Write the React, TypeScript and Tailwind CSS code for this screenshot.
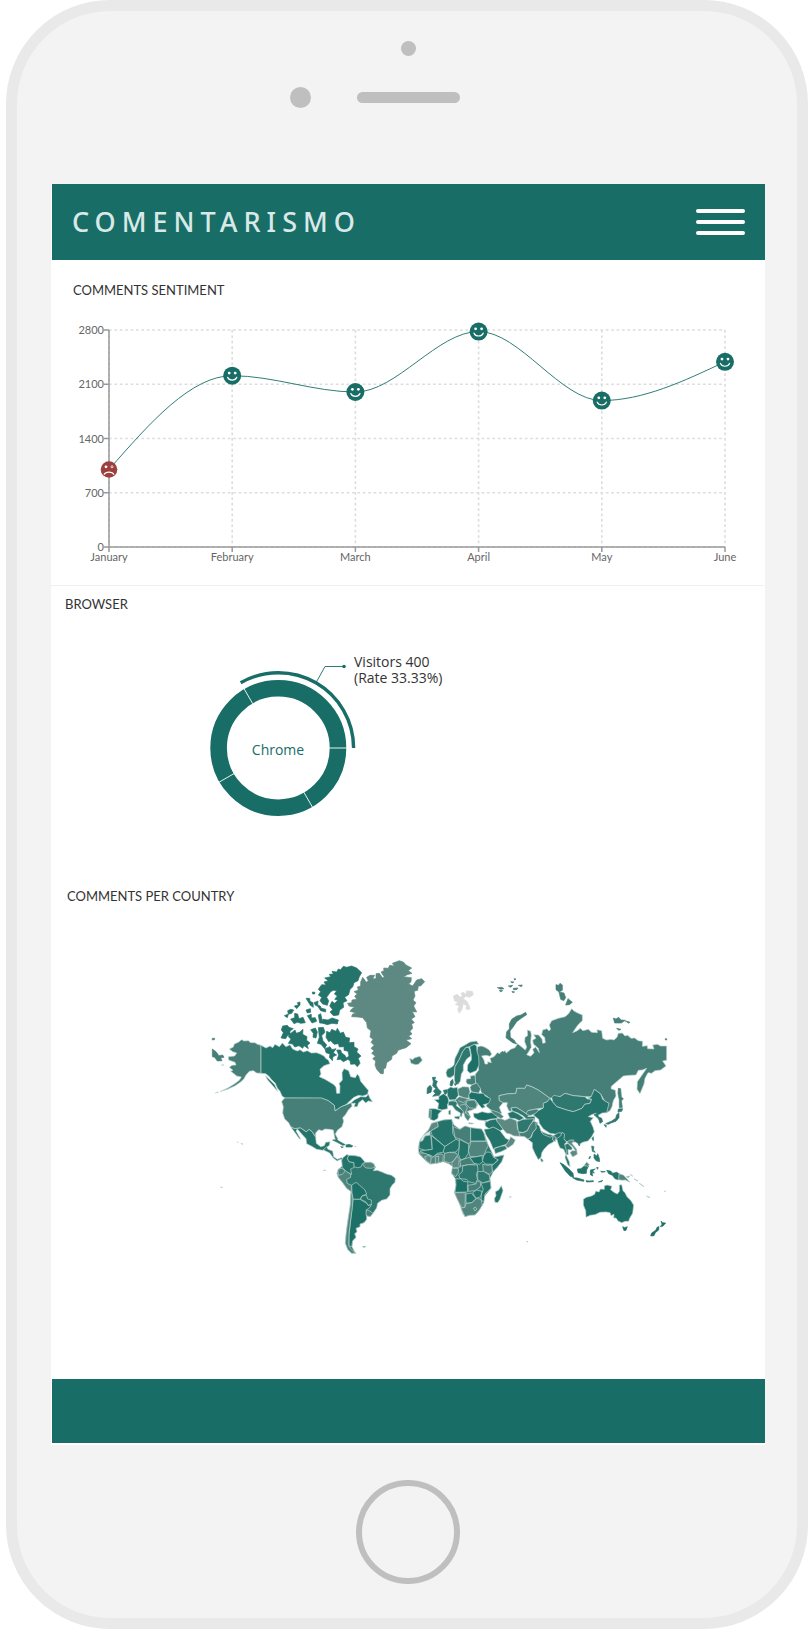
import { ReactNode } from "react";

interface SentimentPoint {
  month: string;
  comments: number;
}

interface Region {
  d: string;
  fill: string;
  islands?: boolean;
}

const GREEN = "#186e66";

const sentiment: SentimentPoint[] = [
  { month: "January", comments: 1000 },
  { month: "February", comments: 2210 },
  { month: "March", comments: 2000 },
  { month: "April", comments: 2780 },
  { month: "May", comments: 1890 },
  { month: "June", comments: 2390 },
];

const ticks = [0, 700, 1400, 2100, 2800];

const chart = { left: 58, right: 674, top: 20, bottom: 237 };

const xAt = (i: number) => chart.left + ((chart.right - chart.left) * i) / (sentiment.length - 1);
const yAt = (v: number) => chart.bottom - ((chart.bottom - chart.top) * v) / 2800;

// monotone cubic interpolation through evenly spaced points
function monotonePath(points: { x: number; y: number }[]) {
  const n = points.length;
  const slopes = points.slice(1).map((p, i) => (p.y - points[i].y) / (p.x - points[i].x));
  const tangents = points.map((_, i) => {
    if (i === 0 || i === n - 1) return 0;
    const a = slopes[i - 1];
    const b = slopes[i];
    if (a * b <= 0) return 0;
    return Math.sign(a) * Math.min(Math.abs(a), Math.abs(b), Math.abs(a + b) / 4) * 2;
  });
  tangents[0] = (3 * slopes[0] - tangents[1]) / 2;
  tangents[n - 1] = (3 * slopes[n - 2] - tangents[n - 2]) / 2;
  let d = `M${points[0].x},${points[0].y}`;
  for (let i = 1; i < n; i++) {
    const p = points[i - 1];
    const q = points[i];
    const dx = (q.x - p.x) / 3;
    d += `C${p.x + dx},${p.y + dx * tangents[i - 1]} ${q.x - dx},${q.y - dx * tangents[i]} ${q.x},${q.y}`;
  }
  return d;
}

function Face({ x, y, happy }: { x: number; y: number; happy: boolean }) {
  return (
    <g transform={`translate(${x} ${y})`}>
      <circle r={happy ? 9 : 8.3} fill={happy ? GREEN : "#9c3f3e"} />
      <circle cx="-3" cy="-2.7" r="1.4" fill="#fff" />
      <circle cx="3" cy="-2.7" r="1.4" fill="#fff" />
      {!happy && <circle cx="3" cy="-2.7" r="0.7" fill="#9c3f3e" />}
      <path d={happy ? "M-4.6 1.6C-3 5.4 3 5.4 4.6 1.6" : "M-4.8 4.8C-3.4 1.8 3.4 1.8 4.8 4.8"} fill="none" stroke="#fff" strokeWidth="1.2" strokeLinecap="round" />
    </g>
  );
}

function SentimentChart() {
  const points = sentiment.map((p, i) => ({ x: xAt(i), y: yAt(p.comments) }));
  return (
    <svg viewBox="0 0 713 275" className="block w-full font-[Lato,sans-serif] text-[11px]" role="img" aria-label="Comments sentiment">
      <g stroke="#ddd" strokeWidth="1.6" strokeDasharray="2.7 2.7">
        {ticks.map((t) => <line key={t} x1={chart.left} x2={chart.right} y1={yAt(t)} y2={yAt(t)} />)}
        {points.map((p) => <line key={p.x} x1={p.x} x2={p.x} y1={chart.top} y2={chart.bottom} />)}
      </g>
      <g stroke="#999" strokeWidth="1.5">
        <path d={`M${chart.left},${chart.top}V${chart.bottom}H${chart.right}`} fill="none" />
        {ticks.map((t) => <line key={t} x1={chart.left - 5} x2={chart.left} y1={yAt(t)} y2={yAt(t)} />)}
        {points.map((p) => <line key={p.x} x1={p.x} x2={p.x} y1={chart.bottom} y2={chart.bottom + 5} />)}
      </g>
      <g fill="#666">
        {ticks.map((t) => <text key={t} x={chart.left - 5} y={yAt(t) + 4} textAnchor="end">{t}</text>)}
        {sentiment.map((p, i) => <text key={p.month} x={xAt(i)} y={chart.bottom + 14} textAnchor="middle">{p.month}</text>)}
      </g>
      <path d={monotonePath(points)} fill="none" stroke={GREEN} strokeWidth="0.9" />
      {sentiment.map((p, i) => <Face key={p.month} x={points[i].x} y={points[i].y} happy={p.comments >= 1500} />)}
    </svg>
  );
}

function BrowserChart() {
  const polar = (r: number, deg: number) => {
    const a = (deg * Math.PI) / 180;
    return `${227.3 + r * Math.cos(a)},${118 - r * Math.sin(a)}`;
  };
  return (
    <svg viewBox="0 0 713 240" className="block w-full font-['Open_Sans',sans-serif] text-sm" role="img" aria-label="Visitors by browser">
      <circle cx="227.3" cy="118" r="59.7" fill="none" stroke={GREEN} strokeWidth="16.6" />
      {[0, 120, 210, 300].map((deg) => <path key={deg} d={`M${polar(51, deg)}L${polar(69, deg)}`} stroke="#fff" strokeWidth="0.9" />)}
      <path d={`M${polar(75.3, 120)}A75.3,75.3 0 0 1 ${polar(75.3, 0)}`} fill="none" stroke={GREEN} strokeWidth="3.4" />
      <path d={`M${polar(75.3, 60)}L274,36.5H293`} fill="none" stroke={GREEN} strokeWidth="0.9" />
      <circle cx="293" cy="36.5" r="1.8" fill={GREEN} />
      <text x="227" y="125" textAnchor="middle" fill={GREEN}>Chrome</text>
      <text x="303" y="37" fill="#333">Visitors 400</text>
      <text x="303" y="53" fill="#333">(Rate 33.33%)</text>
    </svg>
  );
}

const D1 = "#1d7067";
const D2 = "#24746b";
const D3 = "#2f786f";
const M1 = "#457f77";
const M2 = "#4f857c";
const L1 = "#5d8982";

const northAmerica: Region[] = [
  { fill: M1, d: "M88,297 100,291 103,282 115,277 125,269 132,273 145,272 152,278 165,278 172,283 183,286V370L170,369 160,362 148,364 138,375 132,386 122,396 104,408 84,417 60,425 85,413 103,402 118,391 124,381 110,378 103,372 92,364 99,361 88,352 96,346 108,345 105,337 94,333 86,330 85,320 104,318 110,309 98,305Z" },
  { fill: M1, islands: true, d: "M37,297 48,305 57,317 68,315 72,322 62,324 66,332 52,333 44,322 37,320ZM37,265 44,265 43,269 37,270Z" },
  { fill: D2, d: "M183,286 198,294 210,288 218,293 225,283 238,290 247,279 258,290 270,284 278,297 292,303 300,299 310,306 322,302 334,309 350,308 362,313 372,318 378,326 385,330 390,341 372,347 360,358 363,372 358,380 375,388 390,397 402,404 408,412 410,430 419,430 420,408 417,401 427,390 426,368 432,356 446,362 452,380 466,383 472,372 478,380 482,394 493,407 505,421 503,433 488,438 476,436 462,442 450,452 438,464 424,470 405,483 403,466 385,452 365,445 255,444 246,438 240,424 232,414 226,400 214,388 206,378 197,371 183,370Z" },
  { fill: D2, d: "M452,460 464,449 482,440 498,441 505,433 510,445 518,455 505,453 497,459 488,449 476,458 472,470 462,470 466,460ZM196,377 212,392 224,404 233,424 226,416 214,402 203,390Z" },
  { fill: D2, islands: true, d: "M395,238 408,244 412,235 421,250 430,246 437,262 449,264 447,278 462,277 462,290 474,297 470,306 483,318 475,325 480,340 472,350 464,342 452,343 450,332 438,325 447,318 444,304 432,301 432,290 418,291 415,281 402,283 392,272 386,275 378,262 380,244 390,248Z" },
  { fill: D2, islands: true, d: "M485,68 470,54 455,48 440,52 430,49 422,59 415,57 410,66 396,64 400,72 388,73 392,80 374,84 385,92 372,96 378,105 365,104 355,118 362,125 355,135 365,142 360,152 368,162 382,166 386,152 380,142 392,125 400,121 410,122 403,132 412,138 404,148 414,151 403,160 396,154 389,168 398,179 390,186 400,197 416,195 419,180 431,172 429,158 441,152 434,142 446,134 450,118 458,111 462,98 474,92 478,80Z" },
  { fill: D2, islands: true, d: "M248,228 262,226 267,232 280,236 270,243 270,254 262,257 257,266 243,264 250,248 244,240ZM270,252 285,240 289,250 300,246 309,238 308,253 321,260 320,271 330,279 322,286 325,296 312,287 308,295 297,287 284,291 278,282 265,280 273,267 265,260Z" },
  { fill: D2, islands: true, d: "M253,197 265,192 263,182 272,178 281,180 275,190 265,193 262,203ZM272,207 284,203 284,190 293,192 297,206 309,202 316,218 303,220 292,217 282,221ZM318,145 329,145 330,154 339,158 340,172 331,166ZM342,158 354,153 353,168 346,166ZM283,168 295,165 292,158 300,156 300,165 290,176ZM318,180 331,176 332,187 322,189ZM350,164 361,168 363,174 377,178 377,186 362,182ZM322,197 334,193 334,204 346,203 350,214 336,219ZM355,195 362,191 365,204 371,220 359,219ZM332,239 346,234 352,246 348,264 339,262 340,250ZM355,233 370,232 375,247 365,257 369,272 380,285 374,296 363,283 352,280 358,262ZM369,208 384,210 396,204 415,210 412,222 396,220 382,224 369,220ZM410,300 422,300 425,309 434,315 442,329 430,335 421,328 411,329 416,315ZM375,296 390,290 396,299 408,296 400,308 410,315 399,320 397,332 388,322 390,312 378,308ZM337,126 345,127 344,132 338,132Z" },
  { fill: M1, d: "M255,444H365L385,452 403,466 405,483 424,470 440,464 454,458 456,469 445,480 436,495 428,503 431,514 426,530 413,540 406,552 414,567 410,574 404,564 400,540 388,538 375,537 366,542 356,539 347,549 347,562 336,545 327,538 319,546 302,534 283,536 272,530 266,518 254,507 248,489 250,470 245,455 250,448Z" },
  { fill: D2, d: "M272,530 283,536 302,534 319,546 327,538 336,545 347,562 349,580 362,590 373,587 377,577 390,575 388,586 377,595 368,601 350,598 335,589 320,581 318,566 305,552 292,537 288,543 302,567 298,566 283,545Z" },
  { fill: D3, d: "M370,600 380,590 384,598 398,603 401,620 412,628 424,623 434,628 422,628 411,633 400,624 389,609Z" },
  { fill: D3, islands: true, d: "M398,570 410,569 421,576 436,584 428,586 412,577ZM438,585 447,583 458,587 456,591 438,591ZM422,590 430,591 425,593Z" },
  { fill: "#b4cfcb", islands: true, d: "M112,576 115,577 114,578ZM123,580 129,582 127,584ZM64,345 72,345ZM46,429 56,426ZM463,589 469,590ZM370,661 378,661ZM61,712 68,712Z" },
  { fill: L1, islands: true, d: "M443,160 455,158 456,150 470,148 464,138 472,132 462,125 475,120 472,111 482,108 482,96 488,82 495,91 498,97 505,93 500,82 510,76 524,76 518,86 528,86 528,71 538,70 548,84 552,80 543,66 552,62 551,54 565,55 569,46 583,48 577,40 598,32 610,36 618,45 635,54 625,62 636,70 622,74 610,80 634,83 633,95 626,102 638,108 650,90 665,86 674,95 662,108 655,108 653,121 642,124 645,138 639,150 648,158 641,168 650,186 637,185 645,200 634,207 643,218 635,222 638,235 630,244 636,252 626,258 635,266 618,270 633,281 618,293 605,297 594,301 590,310 576,318 575,328 560,338 557,354 551,357 550,371 542,371 530,358 525,345 527,333 518,326 526,319 515,310 522,302 513,295 522,286 513,277 519,268 510,261 513,242 502,234 500,218 488,203 473,201 455,200 457,193 468,189 450,184 455,177 464,172 447,168Z" },
  { fill: M1, d: "M629,325 638,329 644,323 660,319 667,331 655,343 647,344 633,340Z" },
];

const southAmerica: Region[] = [
  { fill: D3, d: "M425,120 430,112 437,112 440,104 450,107 465,107 476,109 482,113 487,121 495,128 512,127 520,130 527,142 520,152 532,151 548,157 560,162 575,166 586,175 585,187 576,196 570,206 570,225 560,237 545,241 533,250 530,264 518,281 510,290 500,288 500,298 492,308 480,312 480,320 468,325 471,335 464,341 468,352 458,362 456,380 462,392 468,400 455,400 443,388 436,370 438,345 441,320 445,290 450,260 452,230 453,212 440,205 428,188 415,172 411,160 415,148 427,138Z" },
  { fill: M2, d: "M415,148 432,147 440,155 452,162 452,172 440,178 441,190 455,196 453,215 440,205 428,188 415,172 411,160Z" },
  { fill: M1, d: "M414,148 426,145 436,153 427,163 415,166Z" },
  { fill: D2, d: "M425,120 430,112 440,104 447,106 442,116 447,125 462,128 463,142 452,147 455,163 440,155 427,143Z" },
  { fill: D1, d: "M447,106 465,107 482,111 495,126 487,131 483,141 472,143 462,140 462,128 447,125 442,115Z" },
  { fill: M2, d: "M495,127 512,127 522,132 525,142 514,145 498,144 488,135Z" },
  { fill: D1, d: "M455,195 468,187 478,195 495,210 500,222 486,228 480,238 460,238 456,220Z" },
  { fill: D2, d: "M486,228 499,225 503,237 514,240 514,254 505,256 497,245 481,238Z" },
  { fill: D1, d: "M460,238 480,238 500,250 505,257 514,254 510,262 499,270 500,298 492,308 480,312 480,320 468,325 471,335 464,341 468,352 458,362 455,380 447,378 447,345 452,300 456,265Z" },
  { fill: M1, d: "M499,269 509,273 519,280 510,290 498,286Z" },
  { fill: M2, d: "M453,215 457,225 457,262 452,300 447,340 446,376 452,385 466,399 455,400 443,388 436,370 438,345 441,320 446,288 451,255Z" },
  { fill: D3, d: "M488,379 498,379 495,382 489,382Z" },
];

const eurasia: Region[] = [
  { fill: M1, d: "M200,310 203,290 214,288 225,292 238,300 245,312 240,319 228,316 215,318 222,330 225,342 233,342 233,335 244,338 240,325 252,320 262,308 270,311 285,302 289,309 302,298 315,293 323,281 335,291 346,300 350,291 344,275 345,262 353,257 352,240 362,244 364,256 362,276 364,292 356,305 350,314 362,319 372,308 368,298 377,291 388,308 385,295 370,282 368,270 378,265 371,254 386,255 396,267 398,280 406,278 404,262 395,254 398,240 411,236 417,243 422,238 418,225 425,212 445,205 465,200 475,192 485,176 492,183 505,190 517,195 517,212 507,221 500,230 488,248 502,242 511,235 519,242 535,238 545,247 562,248 561,239 575,242 578,265 590,270 603,268 612,270 621,262 625,250 637,249 645,258 653,256 663,265 674,264 685,272 698,274 697,289 712,287 713,296 732,297 728,285 742,283 752,288 770,288V331L758,333 768,348 752,360 735,362 725,370 714,368 705,385 702,402 690,431 681,418 682,395 694,378 710,355 697,360 685,361 678,375 660,376 640,378 626,390 604,409 603,416 616,421 618,438 610,452 606,470 600,482 590,488 585,480 597,460 585,455 572,432 553,418 545,440 525,440 490,437 465,430 450,440 420,445 385,420 365,410 350,405 345,415 320,415 318,430 290,432 267,437 268,452 280,457 268,472 275,490 262,492 250,485 240,478 228,468 240,447 230,438 215,430 210,415 196,402 195,385 196,373 206,360Z" },
  { fill: M1, islands: true, d: "M347,187 350,194 335,204 320,215 310,230 300,243 301,262 312,270 320,282 308,278 288,263 290,245 298,237 298,222 305,208 320,198 333,195ZM438,104 446,106 450,100 457,105 457,121 447,126 438,119ZM447,126 462,129 467,143 461,152 452,148ZM474,146 487,157 478,164 467,165ZM610,204 618,207 626,202 633,210 646,211 634,219 614,219ZM646,213 659,216 657,220ZM620,235 633,238 626,241ZM625,415 632,416 634,440 640,447 634,452 637,472 628,473 628,450 624,430ZM766,266 770,266 770,270 766,270ZM270,310 278,304 278,309Z" },
  { fill: M1, islands: true, d: "M262,113 275,112 282,116 272,118ZM268,121 278,122 272,126ZM295,108 308,106 303,112ZM310,115 324,114 320,119 310,119ZM325,106 337,105 334,110ZM302,95 312,96 306,99ZM312,86 318,87 314,90ZM306,124 314,126 308,128Z" },
  { fill: "#dcdcdc", islands: true, d: "M130,138 142,133 150,142 157,137 153,130 160,127 168,133 170,123 187,124 190,134 178,142 167,138 160,147 170,153 178,168 180,178 168,178 170,167 160,161 156,178 148,190 143,178 148,168 136,163 145,156 134,153Z" },
  { fill: D3, d: "M112,358 124,352 132,345 135,325 145,305 150,293 165,285 180,276 200,273 206,283 193,283 180,290 168,292 158,305 148,328 135,350 133,375 120,384 111,380 108,368Z" },
  { fill: D3, d: "M133,377 135,350 148,328 158,305 168,292 177,293 181,308 182,318 170,327 160,345 160,362 154,372 152,388 146,402 137,404 133,390Z" },
  { fill: D1, d: "M179,290 193,283 200,288 201,305 206,320 207,345 199,362 180,370 172,362 173,345 184,330 184,315Z" },
  { fill: D3, islands: true, d: "M122,393 128,388 130,398 126,408 120,406ZM133,401 139,402 136,407ZM146,392 150,391 149,395Z" },
  { fill: M1, d: "M170,387 182,386 181,378 195,376 197,400 186,405 172,402 168,395Z" },
  { fill: M1, d: "M185,405 200,399 212,416 206,430 184,425 180,412Z" },
  { fill: M2, d: "M143,417 158,410 176,411 180,425 176,445 162,444 145,436Z" },
  { fill: D2, d: "M112,418 122,411 131,414 142,412 145,436 136,449 118,450 112,436Z" },
  { fill: D1, d: "M73,449 87,448 86,440 100,431 113,440 117,456 112,464 113,476 96,480 83,476 86,460Z" },
  { fill: D1, d: "M57,476 75,476 96,482 85,492 84,505 72,512 60,508Z" },
  { fill: M2, d: "M57,480 64,480 63,505 56,503Z" },
  { fill: D3, islands: true, d: "M67,382 77,382 74,390 82,394 78,405 84,416 94,425 88,436 68,439 76,430 70,424 77,416 68,408 70,395ZM52,414 60,406 66,413 63,427 51,431ZM100,421 112,419 112,428 105,434Z" },
  { fill: D3, d: "M115,455 134,450 142,460 139,467 160,482 163,488 157,489 155,500 150,498 151,489 136,480 127,467 115,466ZM133,500 150,498 147,508 135,505ZM116,482 122,480 122,494 116,493Z" },
  { fill: M2, d: "M136,450 148,440 176,447 200,452 203,466 195,476 184,481 173,484 182,500 174,513 165,502 160,485 145,466 140,457Z" },
  { fill: "none", d: "M145,452 160,458 176,447M150,466 165,462 172,474 165,488M118,450 136,455M165,462 170,455M184,481 165,488 182,500" },
  { fill: D1, d: "M176,434 184,426 206,430 220,430 226,438 242,446 236,460 220,464 226,471 216,475 205,462 196,450 178,447Z" },
  { fill: M1, d: "M172,452 194,450 200,463 198,475 180,474 168,462Z" },
  { fill: D1, d: "M190,490 203,490 216,485 234,489 250,487 262,495 262,506 244,507 225,512 205,510 192,502Z" },
  { fill: M2, d: "M240,480 250,482 268,488 281,500 273,506 262,500 250,492ZM176,518 190,520 188,522 176,521ZM224,514 233,513 228,519Z" },
  { fill: M2, d: "M267,437 290,432 318,430 320,415 345,415 350,405 365,410 385,420 420,445 412,455 400,460 400,474 378,477 355,482 350,492 335,482 318,472 303,474 305,484 297,483 290,468 292,458 280,458 268,452Z" },
  { fill: D3, d: "M303,474 318,472 335,482 350,492 364,488 353,500 375,499 374,512 352,510 340,498 322,488 308,484Z" },
  { fill: D2, d: "M293,490 308,484 325,492 342,504 328,512 316,506 300,505Z" },
  { fill: M1, d: "M353,482 378,477 388,480 376,491 360,497 348,492Z" },
  { fill: D3, d: "M425,442 432,436 450,440 465,430 490,437 525,440 532,447 545,448 540,460 524,463 516,475 490,485 470,480 440,470 428,456Z" },
  { fill: D2, d: "M553,418 572,432 578,448 588,455 597,460 590,488 577,489 566,495 557,490 545,494 535,500 550,503 541,514 549,531 553,545 545,560 534,573 518,577 507,584 496,576 480,577 466,573 456,560 440,553 420,550 400,537 388,520 386,508 370,495 385,482 400,474 400,460 412,455 420,445 428,456 440,470 470,480 490,485 516,475 524,463 540,460 545,448 532,444 543,441Z" },
  { fill: D3, islands: true, d: "M552,494 563,490 565,500 575,505 578,515 570,520 566,507ZM625,477 638,476 635,484 624,486ZM627,488 627,503 618,514 605,518 595,523 587,521 605,513 617,505 620,494ZM582,524 589,526 588,532ZM505,583 510,584 508,588Z" },
];

const southEast: Region[] = [
  { fill: D2, d: "M225,8 240,0 258,-3 270,15 280,28 270,32 250,22 237,26 226,18Z" },
  { fill: D2, d: "M222,28 237,26 250,21 270,32 280,45 287,55 298,60 292,72 272,79 255,84 250,88 240,64 228,45Z" },
  { fill: D3, d: "M252,86 272,79 286,77 291,86 276,94 256,101Z" },
  { fill: L1, d: "M298,60 302,50 316,60 310,73 294,84 286,77Z" },
  { fill: L1, d: "M260,-6 276,-3 285,1 300,-6 320,2 322,25 330,40 331,49 312,48 300,42 290,40 279,28 270,15 260,3Z" },
  { fill: D3, d: "M321,5 340,-2 357,-3 372,-4 366,8 360,16 352,32 338,38 325,35Z" },
  { fill: M1, d: "M326,38 340,38 352,32 360,16 370,3 383,8 379,25 368,39 362,52 354,58 344,50 331,49Z" },
  { fill: D2, d: "M354,58 364,52 368,39 379,25 377,10 388,18 393,33 412,43 430,47 446,38 460,40 452,54 445,60 436,56 430,66 415,74 402,88 396,97 393,112 385,119 376,103 367,83 367,68Z" },
  { fill: D3, d: "M393,35 412,42 428,46 422,52 400,44ZM391,115 397,117 400,124 394,126Z" },
  { fill: M1, d: "M427,50 438,51 436,65 428,60Z" },
  { fill: D2, d: "M440,56 452,48 456,37 464,42 462,57 470,66 464,72 470,85 472,99 467,102 461,88 450,84 445,73Z" },
  { fill: D3, d: "M464,74 474,70 487,84 485,90 474,89 475,104 468,104 478,125 480,140 473,134 465,112 470,95Z" },
  { fill: L1, d: "M470,66 480,60 492,60 486,70 500,88 502,103 488,111 480,98 486,92 496,92 488,80 477,72Z" },
  { fill: D2, islands: true, d: "M450,128 460,133 477,147 489,160 491,172 481,169 466,153ZM488,173 502,174 522,180 521,184 500,180ZM528,182 538,183 550,182 550,185 530,186ZM565,186 578,181 575,185ZM502,147 513,146 524,137 536,137 530,150 529,160 518,161 504,158ZM541,150 556,147 548,153 553,159 546,158 548,168 541,164ZM590,151 602,153 608,160 620,157 627,161 626,179 615,176 607,166 596,161ZM560,142 565,143 562,148ZM572,154 586,155 576,157Z" },
  { fill: M2, d: "M522,137 530,126 538,134 534,139ZM627,161 640,165 648,173 660,187 646,180 637,181 626,179ZM648,170 660,168 655,173Z" },
  { fill: D3, islands: true, d: "M545,78 552,80 550,90 556,97 547,94ZM546,56 550,50 550,62ZM552,102 560,108 563,101 568,115 569,125 558,122 552,114ZM536,115 541,108 540,116Z" },
  { fill: "#a5c4c0", islands: true, d: "M672,177 684,183ZM688,190 702,200ZM710,228 720,233ZM763,215 767,213ZM660,163 668,168ZM350,365 354,365ZM298,232 304,230Z" },
  { fill: D1, d: "M520,238 529,232 544,228 554,223 557,213 567,216 571,207 583,208 583,197 592,195 606,199 602,209 612,217 622,222 628,214 628,195 635,194 639,212 645,218 651,230 662,241 671,255 668,280 659,295 656,304 646,304 635,308 624,303 618,294 611,294 612,283 603,287 600,278 588,276 570,277 555,284 541,286 528,292 527,272 520,255Z" },
  { fill: D1, islands: true, d: "M638,320 644,323 652,320 648,331 642,332ZM753,303 758,308 767,309 759,318 751,320 756,313ZM747,320 746,330 736,338 732,347 722,348 725,339 737,331 742,321Z" },
  { fill: D2, d: "M274,197 279,212 270,238 263,248 255,247 253,236 258,227 256,215 266,210Z" },
];

const africa: Region[] = [
  { fill: D3, d: "M65,280 82,275 100,270 125,268 132,285 150,298 165,288 182,293 215,297 222,310 235,345 245,365 252,381 282,375 275,395 262,412 250,425 240,445 243,475 234,487 222,500 222,517 208,540 195,555 178,556 165,560 158,550 148,520 133,488 138,465 135,445 125,430 128,410 118,402 100,395 80,400 60,402 45,390 27,372 25,355 30,330 45,310 57,300Z" },
  { fill: L1, d: "M65,280 82,275 86,288 68,300 55,308 42,316 55,300Z" },
  { fill: "#dfe8e6", d: "M30,333 38,318 60,304 60,314 45,318 38,332Z" },
  { fill: D2, d: "M28,337 38,332 45,318 62,315 67,358 46,361 27,355Z" },
  { fill: D2, d: "M82,275 100,270 125,268 128,282 128,310 140,330 120,340 105,350 67,317 62,303 85,290Z" },
  { fill: D1, d: "M64,317 105,350 101,366 82,370 70,380 58,374 45,372 30,363 46,361 67,358Z" },
  { fill: M1, d: "M129,290 150,298 165,288 182,293 182,335 176,342 152,328 135,322Z" },
  { fill: D2, d: "M182,293 215,297 222,310 228,333 182,333Z" },
  { fill: M2, d: "M182,335 229,334 235,346 228,360 222,376 200,380 180,380 175,362 180,345Z" },
  { fill: D2, d: "M104,350 138,328 148,332 147,354 138,366 118,367 105,372 100,364Z" },
  { fill: D2, d: "M148,328 176,342 175,370 165,385 152,390 145,372 148,352Z" },
  { fill: M2, d: "M104,370 118,367 138,369 143,376 130,393 120,399 102,393Z" },
  { fill: M2, d: "M26,368 45,370 58,376 68,383 80,373 96,372 100,376 98,395 80,400 60,402 45,390Z" },
  { fill: L1, d: "M44,380 58,376 64,384 61,401 48,392ZM76,380 86,378 86,399 76,400Z" },
  { fill: L1, d: "M125,400 142,378 148,388 146,405 152,411 128,414Z" },
  { fill: M2, d: "M126,415 145,415 145,428 137,440 125,431Z" },
  { fill: M1, d: "M150,392 165,386 178,382 196,402 176,404 152,408Z" },
  { fill: D1, d: "M180,383 200,380 216,377 218,395 208,403 192,400Z" },
  { fill: D1, d: "M222,376 230,366 242,367 251,382 265,388 250,403 226,402 217,392Z" },
  { fill: D2, d: "M251,382 282,375 275,395 262,412 247,427 245,408 265,390Z" },
  { fill: M1, d: "M218,403 234,406 245,404 247,424 240,433 220,424Z" },
  { fill: D3, d: "M158,408 176,404 202,405 204,420 199,433 203,452 196,460 176,455 170,448 150,446 146,435 157,425Z" },
  { fill: D3, d: "M203,425 220,424 238,435 240,452 218,459 203,448Z" },
  { fill: D1, d: "M137,446 152,447 160,454 174,456 172,470 173,486 135,487 138,465Z" },
  { fill: M1, d: "M174,466 198,462 200,452 213,458 210,472 195,482 175,484Z" },
  { fill: D2, d: "M213,460 241,454 243,474 225,492 222,514 213,512 214,492 220,478Z" },
  { fill: L1, d: "M134,488 166,488 165,532 156,534 148,520 140,504Z" },
  { fill: D2, d: "M168,492 184,489 198,506 185,518 168,520Z" },
  { fill: D2, d: "M188,488 200,480 216,484 212,500 198,505Z" },
  { fill: M2, d: "M153,534 165,532 168,521 186,518 200,505 213,508 217,525 208,540 195,555 178,556 165,560Z" },
  { fill: L1, d: "M190,535 196,531 201,537 195,543Z" },
];

function Land({ regions, shift }: { regions: Region[]; shift: string }) {
  return (
    <g transform={shift}>
      {regions.map((r) => <path key={r.d} d={r.d} fill={r.fill} stroke={r.islands ? r.fill : undefined} />)}
    </g>
  );
}

function CountryMap() {
  return (
    <svg viewBox="-447 -60 2139 1170" className="block w-full" role="img" aria-label="Comments per country">
      <g stroke="#bcd4d0" strokeWidth="2" strokeLinejoin="round">
        <Land regions={northAmerica} shift="translate(0 0)" />
        <Land regions={southAmerica} shift="translate(0 510)" />
        <Land regions={eurasia} shift="translate(630 0)" />
        <Land regions={africa} shift="translate(630 240)" />
        <Land regions={southEast} shift="translate(630 510)" />
      </g>
    </svg>
  );
}

function PanelTitle({ children }: { children: ReactNode }) {
  return <h2 className="font-[Lato,sans-serif] text-[13px] leading-5 text-[#333]">{children}</h2>;
}

export default function App() {
  return (
    <div className="bg-white pr-1 pl-1.5">
      <div className="rounded-[104px] border-[11px] border-[#e9e9e9] bg-[#f3f3f3] pt-[30px] pr-8 pb-[34px] pl-[34px]">
        <div className="mx-auto size-[15px] rounded-full bg-[#bfbfbf]" />
        <div className="mt-[31px] grid grid-cols-[1fr_auto_1fr] items-center">
          <div className="mr-[46px] size-[21px] justify-self-end rounded-full bg-[#bfbfbf]" />
          <div className="h-[11px] w-[103px] rounded-full bg-[#bfbfbf]" />
        </div>

        <div className="mt-[76px] bg-white pb-0.5">
          <header className="ml-px flex h-[76px] items-center justify-between bg-[#186e66] px-5">
            <h1 className="font-['Noto_Sans',sans-serif] text-[27px] font-medium tracking-[6px] text-[#d9e9e8]">COMENTARISMO</h1>
            <button type="button" aria-label="Menu" className="flex w-[49px] flex-col gap-[7px]">
              <span className="h-1 rounded-full bg-white" />
              <span className="h-1 rounded-full bg-white" />
              <span className="h-1 rounded-full bg-white" />
            </button>
          </header>

          <main className="mr-px">
            <section className="border-b border-[#eef1f3] pt-5">
              <div className="mb-2.5 pl-[22px]"><PanelTitle>COMMENTS SENTIMENT</PanelTitle></div>
              <SentimentChart />
            </section>
            <section className="pt-2">
              <div className="mb-4 pl-3.5"><PanelTitle>BROWSER</PanelTitle></div>
              <BrowserChart />
            </section>
            <section className="pt-4 pb-[59px]">
              <div className="mb-6 pl-4"><PanelTitle>COMMENTS PER COUNTRY</PanelTitle></div>
              <CountryMap />
            </section>
          </main>

          <footer className="ml-px h-16 bg-[#186e66]" />
        </div>

        <button type="button" aria-label="Home" className="mx-auto mt-[35px] block size-[104px] rounded-full border-[6px] border-[#bfbfbf]" />
      </div>
    </div>
  );
}
